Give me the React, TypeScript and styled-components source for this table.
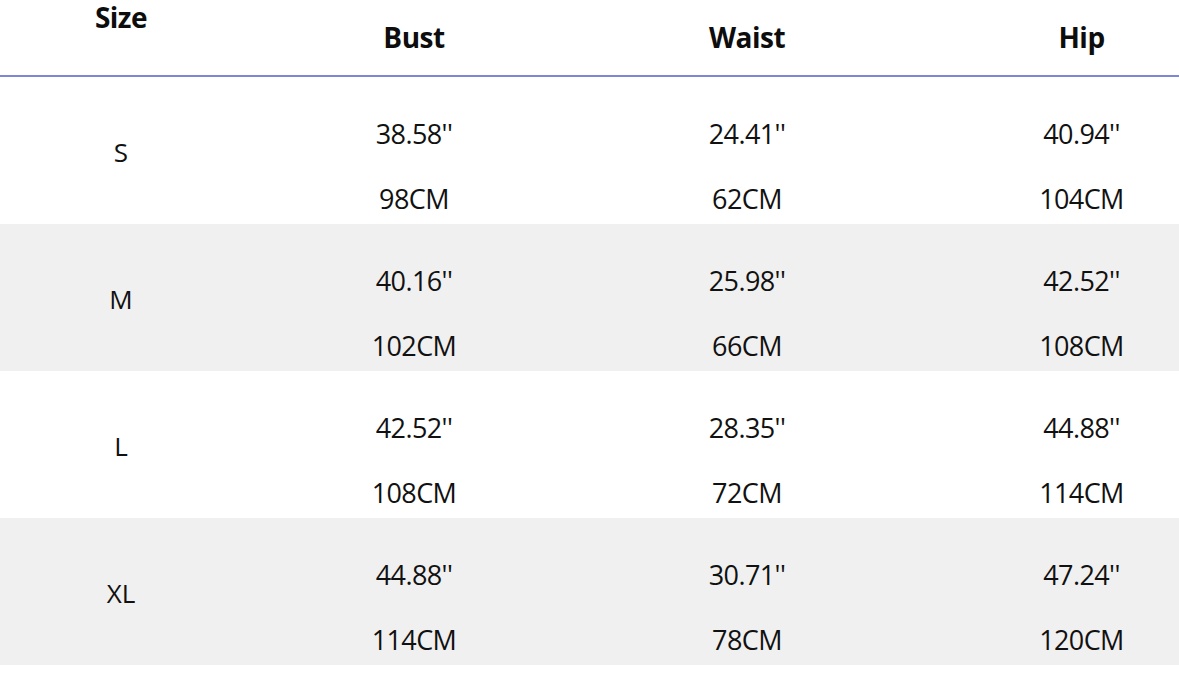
import * as React from "react";
import styled, { createGlobalStyle } from "styled-components";

const GlobalStyle = createGlobalStyle`
  html, body {
    margin: 0;
    padding: 0;
    background: #ffffff;
  }
  body {
    font-family: "Open Sans", "Noto Sans", "Liberation Sans", sans-serif;
    color: #111111;
    overflow: hidden;
  }
`;

const Chart = styled.div`
  width: 1179px;
  display: flex;
  flex-direction: column;
`;

const HeadRow = styled.div`
  display: grid;
  grid-template-columns: 242px 344px 322px 1fr;
  height: 75px;
  border-bottom: 2px solid #7d87d8;
`;

const HeadCell = styled.div<{ $top: number; $shift?: number }>`
  text-align: center;
  padding-top: ${(p) => p.$top}px;
  padding-left: ${(p) => p.$shift ?? 0}px;
  font-size: 28px;
  font-weight: 700;
  line-height: 32px;
  letter-spacing: -0.5px;
  color: #0d0d0d;
`;

const Row = styled.div<{ $shade: boolean }>`
  display: grid;
  grid-template-columns: 242px 344px 322px 1fr;
  height: 147px;
  box-sizing: border-box;
  padding-top: 41px;
  background: ${(p) => (p.$shade ? "#f0f0f0" : "#ffffff")};
`;

const SizeCell = styled.div`
  align-self: center;
  margin-top: -38px;
  text-align: center;
  font-size: 26px;
  line-height: 32px;
`;

const ValueCell = styled.div<{ $shift?: number }>`
  display: flex;
  flex-direction: column;
  align-items: center;
  gap: 33px;
  padding-left: ${(p) => p.$shift ?? 0}px;
  font-size: 27px;
  line-height: 32px;
  letter-spacing: -0.6px;
`;

const sizes = [
  { size: "S", bust: ["38.58''", "98CM"], waist: ["24.41''", "62CM"], hip: ["40.94''", "104CM"] },
  { size: "M", bust: ["40.16''", "102CM"], waist: ["25.98''", "66CM"], hip: ["42.52''", "108CM"] },
  { size: "L", bust: ["42.52''", "108CM"], waist: ["28.35''", "72CM"], hip: ["44.88''", "114CM"] },
  { size: "XL", bust: ["44.88''", "114CM"], waist: ["30.71''", "78CM"], hip: ["47.24''", "120CM"] },
];

const App: React.FC = () => {
  return (
    <>
      <GlobalStyle />
      <Chart>
        <HeadRow>
          <HeadCell $top={1}>Size</HeadCell>
          <HeadCell $top={21}>Bust</HeadCell>
          <HeadCell $top={21}>Waist</HeadCell>
          <HeadCell $top={21} $shift={76}>
            Hip
          </HeadCell>
        </HeadRow>
        {sizes.map((row, i) => (
          <Row key={row.size} $shade={i % 2 === 1}>
            <SizeCell>{row.size}</SizeCell>
            <ValueCell>
              <span>{row.bust[0]}</span>
              <span>{row.bust[1]}</span>
            </ValueCell>
            <ValueCell>
              <span>{row.waist[0]}</span>
              <span>{row.waist[1]}</span>
            </ValueCell>
            <ValueCell $shift={76}>
              <span>{row.hip[0]}</span>
              <span>{row.hip[1]}</span>
            </ValueCell>
          </Row>
        ))}
      </Chart>
    </>
  );
};

export default App;
